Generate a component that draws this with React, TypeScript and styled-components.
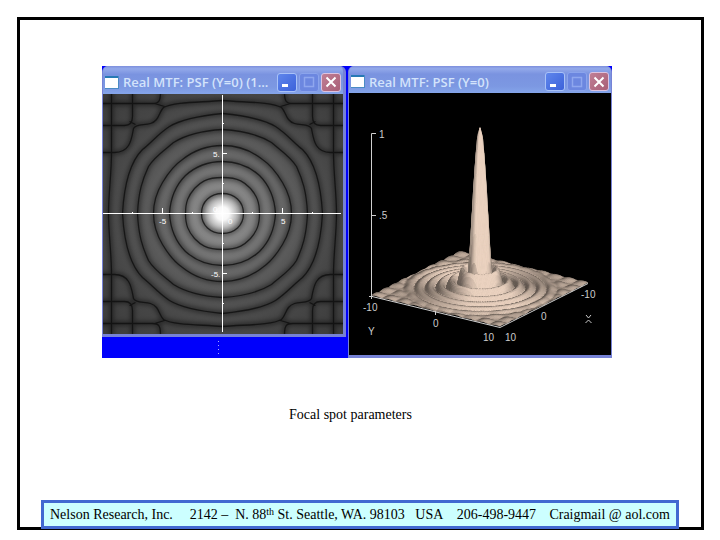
import React from "react";
import styled, { createGlobalStyle } from "styled-components";

const GlobalStyle = createGlobalStyle`
  *, *::before, *::after { box-sizing: border-box; }
  body {
    margin: 0;
    background: #ffffff;
    color: #000000;
    font: 14px/20px "Liberation Serif", "Times New Roman", serif;
  }
`;

const Slide = styled.main`
  display: flex;
  flex-direction: column;
  min-height: calc(100vh - 27px);
  margin: 17px 16px 10px 17px;
  border: 3px solid #000000;
`;

const Figure = styled.figure`
  margin: 46px 89px 0 82px;
`;

const Desktop = styled.div`
  display: grid;
  grid-template-columns: 246fr 264fr;
  background: #0000fb;
`;

const DesktopColumn = styled.div`
  display: flex;
  flex-direction: column;
  min-width: 0;
  padding-right: 2px;
`;

const DottedGuide = styled.div`
  flex: 1;
  width: 1px;
  margin: 4px auto 2px 116px;
  background: repeating-linear-gradient(#a9a9ff 0 1px, transparent 1px 4px);
`;

const WindowFrame = styled.section<{ $side: number }>`
  min-width: 0;
  border: solid #7682d6;
  border-width: 0 ${(p) => p.$side}px 3px 1px;
  border-radius: 6px 6px 0 0;
  overflow: hidden;
  background: #7b93df;
`;

const TitleBar = styled.header<{ $height: number }>`
  display: flex;
  align-items: center;
  height: ${(p) => p.$height}px;
  padding: 4px 2px 0 2px;
  background: linear-gradient(#7d8fdd 0, #93a9ea 10%, #7a93e0 30%, #7c98e2 75%, #85a5ea 100%);
`;

const WindowTitle = styled.h2`
  flex: 1;
  min-width: 0;
  margin: 0 0 0 4px;
  overflow: hidden;
  white-space: nowrap;
  color: #d3e3fb;
  font: 600 13px/18px "Open Sans", "Noto Sans", sans-serif;
`;

const Controls = styled.div`
  display: flex;
  gap: 2px;
`;

const controlColours = {
  minimize: { back: "linear-gradient(135deg, #5f86ec, #3c62da)", edge: "#a9c2f8", ink: "#ffffff" },
  maximize: { back: "#6c87e0", edge: "#8ba4ec", ink: "#8fa7ee" },
  close: { back: "linear-gradient(135deg, #c07f95, #a95f77)", edge: "#dcc3e0", ink: "#ffffff" },
};

type ControlKind = keyof typeof controlColours;

const ControlButton = styled.button<{ $kind: ControlKind }>`
  display: grid;
  place-items: center;
  width: 20px;
  height: 19px;
  padding: 0;
  border: 1px solid ${(p) => controlColours[p.$kind].edge};
  border-radius: 3px;
  background: ${(p) => controlColours[p.$kind].back};
  color: ${(p) => controlColours[p.$kind].ink};
`;

const Drawing = styled.svg`
  display: block;
  width: 100%;
  height: auto;
`;

const PlotText = styled.text`
  font-family: "Liberation Sans", Arial, sans-serif;
`;

const Caption = styled.figcaption`
  margin: 47px 13px 40px 0;
  text-align: center;
`;

const Footer = styled.footer`
  display: flex;
  justify-content: space-between;
  margin: auto 22px -2px 21px;
  padding: 2px 6px 1px;
  border: 3px solid #4169d1;
  background: #ccffff;
  white-space: nowrap;
`;

const Ordinal = styled.sup`
  font-size: 10px;
  line-height: 0;
  vertical-align: 4px;
`;

function AppIcon() {
  return (
    <svg width="14" height="13" viewBox="0 0 14 13" aria-hidden="true">
      <rect width="14" height="13" fill="#ffffff" />
      <rect width="14" height="2" fill="#2779b5" />
      <path d="M13.5 0V13M0 12.5H14" stroke="#4b8bc4" fill="none" />
    </svg>
  );
}

function ControlGlyph({ kind }: { kind: ControlKind }) {
  return (
    <svg width="14" height="14" viewBox="0 0 14 14" fill="none" stroke="currentColor" aria-hidden="true">
      {kind === "minimize" && <path d="M2 10.5H8" strokeWidth="3" />}
      {kind === "maximize" && <path d="M2 2.5H12M2.5 2V11.5H11.5V2" strokeWidth="1.5" />}
      {kind === "close" && <path d="M2.5 2.5L11.5 11.5M11.5 2.5L2.5 11.5" strokeWidth="2" />}
    </svg>
  );
}

function PlotWindow(props: {
  title: string;
  side: number;
  barHeight: number;
  children: React.ReactNode;
}) {
  const kinds: ControlKind[] = ["minimize", "maximize", "close"];
  return (
    <WindowFrame $side={props.side}>
      <TitleBar $height={props.barHeight}>
        <AppIcon />
        <WindowTitle>{props.title}</WindowTitle>
        <Controls>
          {kinds.map((kind) => (
            <ControlButton key={kind} type="button" $kind={kind} aria-label={kind}>
              <ControlGlyph kind={kind} />
            </ControlButton>
          ))}
        </Controls>
      </TitleBar>
      {props.children}
    </WindowFrame>
  );
}

// One quadrant of the dark fringes, measured from the optical axis.
const fringeQuadrant = [
  "M0 20C12 20 21 12 21 0",
  "M0 36C18 36 23 30 28 25C34 18 37 12 37 0",
  "M0 52C14 52 27 47 37 38C46 29 52 17 53 0",
  "M0 68C16 68 30 62 40 54C49 48 54 41 60 31C66 21 69 12 69 0",
  "M0 84C18 83 36 79 49 71C57 64 68 57 74 47C80 34 84 22 85 0",
  "M0 100C20 98 40 95 53 87C64 80 72 70 80 64C89 55 98 36 100 0",
  "M0 113C22 111 48 112 59 106C64 101 63 93 72 90C78 88 87 90 89 85C91 75 92 61 108 61H122",
  "M62 121C62 112 64 110 70 110H122",
  "M90 121V97C90 91 92 88 98 88H122",
  "M58 107L68 110M87 89L93 92",
  "M111 121V61C111 40 114 20 114 0",
].join("");

function FringePlot() {
  const flips = ["1 1", "-1 1", "1 -1", "-1 -1"];
  return (
    <Drawing viewBox="0 0 240 240" role="img" aria-label="Point spread function, top view">
      <defs>
        <radialGradient id="field" gradientUnits="userSpaceOnUse" cx="119.5" cy="119.5" r="165">
          <stop offset="0" stopColor="#ffffff" />
          <stop offset="0.04" stopColor="#f8f8f8" />
          <stop offset="0.09" stopColor="#b4b4b4" />
          <stop offset="0.13" stopColor="#8c8c8c" />
          <stop offset="0.3" stopColor="#6e6e6e" />
          <stop offset="0.5" stopColor="#555555" />
          <stop offset="0.7" stopColor="#474747" />
          <stop offset="1" stopColor="#3c3c3c" />
        </radialGradient>
        <filter id="soften" x="-20%" y="-20%" width="140%" height="140%">
          <feGaussianBlur stdDeviation="2" />
        </filter>
        <path id="fringes" d={fringeQuadrant} fill="none" />
      </defs>
      <rect width="240" height="240" fill="url(#field)" />
      {flips.map((flip) => (
        <g key={flip} transform={`translate(119.5 119.5) scale(${flip})`}>
          <use href="#fringes" stroke="#000000" strokeWidth="5" opacity="0.4" filter="url(#soften)" />
          <use href="#fringes" stroke="#0c0c0c" strokeWidth="1.3" opacity="0.75" />
        </g>
      ))}
      <path
        d="M0 119.5H238M119.5 1V238M59.5 114V119M179.5 114V119M29.5 118V120M89.5 118V120M149.5 118V120M209.5 118V120M119 59.5H124M119 179.5H124M119 29.5H121M119 89.5H121M119 149.5H121M119 209.5H121"
        stroke="#ffffff"
        fill="none"
      />
      <g fill="#ffffff" fontSize="8">
        <PlotText x="110" y="63">5.</PlotText>
        <PlotText x="108" y="183">-5.</PlotText>
        <PlotText x="110" y="118">0.</PlotText>
        <PlotText x="56" y="130">-5</PlotText>
        <PlotText x="178" y="130">5</PlotText>
        <PlotText x="125" y="130">0</PlotText>
      </g>
    </Drawing>
  );
}

// Bessel function of the first kind, order one, by its integral form.
function besselJ1(v: number) {
  const steps = 40;
  let sum = 0;
  for (let i = 0; i < steps; i++) {
    const t = ((i + 0.5) * Math.PI) / steps;
    sum += Math.cos(t - v * Math.sin(t));
  }
  return sum / steps;
}

function amplitude(x: number, y: number) {
  const r = Math.hypot(x, y);
  const v = Math.max(0.001, 2.3 * r);
  const disc = Math.abs((2 * besselJ1(v)) / v);
  const corner = 0.012 * Math.abs(Math.sin(x * 1.5) * Math.sin(y * 1.5));
  const mix = Math.min(1, Math.max(0, (r - 8.5) / 3));
  return disc * (1 - mix) + corner * mix;
}

function project(x: number, y: number, z: number): [number, number] {
  const s = (y + 10) / 20;
  const t = (10 - x) / 20;
  return [23 + 128 * s + 88 * t, 203 + 31 * s - 43.5 * t - 162 * z];
}

// Quads of the surface from back to front, each lit from the viewer's side.
function buildSurface() {
  const n = 88;
  const at = (i: number) => -10 + (20 * i) / n;
  const heights: number[][] = [];
  for (let i = 0; i <= n; i++) {
    heights.push([]);
    for (let j = 0; j <= n; j++) heights[i].push(amplitude(at(i), at(j)));
  }
  const quads: { d: string; fill: string }[] = [];
  for (let i = 0; i < n; i++) {
    for (let j = 0; j < n; j++) {
      const a = heights[i][j];
      const b = heights[i + 1][j];
      const c = heights[i + 1][j + 1];
      const e = heights[i][j + 1];
      const k = (22 * n) / 20 / 2;
      const gx = (b + c - a - e) * k;
      const gy = (c + e - a - b) * k;
      const light = (0.54 - 0.5 * gx - 0.66 * gy) / Math.sqrt(1 + gx * gx + gy * gy);
      const glow = 0.3 * Math.min(1, ((a + b + c + e) / 4) * 3);
      const shade = Math.min(0.97, 0.14 + 0.9 * Math.max(0.28, light) + glow);
      const points = [
        project(at(i), at(j), a),
        project(at(i + 1), at(j), b),
        project(at(i + 1), at(j + 1), c),
        project(at(i), at(j + 1), e),
      ];
      quads.push({
        d: "M" + points.map((p) => p.map((q) => q.toFixed(1)).join(" ")).join("L") + "Z",
        fill: `rgb(${[242, 217, 198].map((q) => Math.round(q * shade)).join(",")})`,
      });
    }
  }
  return quads;
}

const surface = buildSurface();

const surfaceLabels = [
  { x: 30, y: 45, text: "1" },
  { x: 30, y: 126, text: ".5" },
  { x: 14, y: 218, text: "-10" },
  { x: 84, y: 234, text: "0" },
  { x: 19, y: 242, text: "Y" },
  { x: 134, y: 248, text: "10" },
  { x: 156, y: 248, text: "10" },
  { x: 192, y: 227, text: "0" },
  { x: 232, y: 205, text: "-10" },
];

function SurfacePlot() {
  return (
    <Drawing viewBox="0 0 262 262" role="img" aria-label="Point spread function, surface view">
      <rect width="262" height="262" fill="#000000" />
      <g strokeWidth="0.7">
        {surface.map((quad, index) => (
          <path key={index} d={quad.d} fill={quad.fill} stroke={quad.fill} />
        ))}
      </g>
      <path
        d="M27 40.5H22.5V206M22.5 122.5H27M20 203.5H24M23 203.5L151 234.5L239 190.5M86.5 218V222"
        fill="none"
        stroke="#cfcfcf"
      />
      <g fill="#cccccc" fontSize="10">
        {surfaceLabels.map((label, index) => (
          <PlotText key={index} x={label.x} y={label.y}>{label.text}</PlotText>
        ))}
      </g>
      <path d="M237 222L239.5 225L242 222M236.500 230L239.5 227L242.5 230" fill="none" stroke="#cccccc" />
    </Drawing>
  );
}

export default function App() {
  return (
    <>
      <GlobalStyle />
      <Slide>
        <Figure>
          <Desktop>
            <DesktopColumn>
              <PlotWindow title="Real MTF: PSF (Y=0) (1..." side={3} barHeight={28}>
                <FringePlot />
              </PlotWindow>
              <DottedGuide />
            </DesktopColumn>
            <PlotWindow title="Real MTF: PSF (Y=0)" side={1} barHeight={27}>
              <SurfacePlot />
            </PlotWindow>
          </Desktop>
          <Caption>Focal spot parameters</Caption>
        </Figure>
        <Footer>
          <span>Nelson Research, Inc.&nbsp;</span>
          <span>2142 –&nbsp; N. 88<Ordinal>th</Ordinal> St. Seattle, WA. 98103&nbsp;&nbsp; USA</span>
          <span>206-498-9447</span>
          <span>Craigmail @ aol.com</span>
        </Footer>
      </Slide>
    </>
  );
}
